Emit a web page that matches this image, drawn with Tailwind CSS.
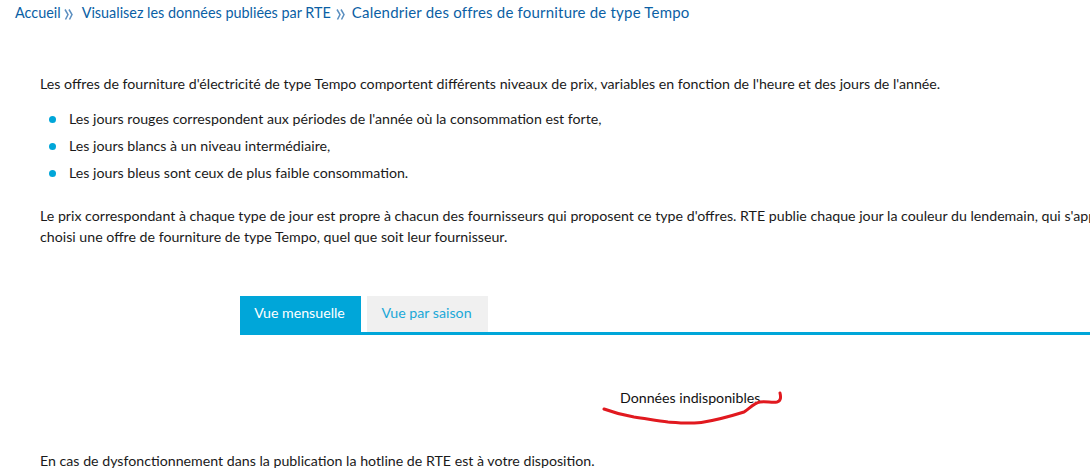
<!DOCTYPE html>
<html lang="fr">
<head>
<meta charset="utf-8">
<script src="https://cdn.jsdelivr.net/npm/@tailwindcss/browser@4"></script>
</head>
<body class="bg-white">
<div class="relative w-[1090px] h-[476px] overflow-hidden font-['Lato','Noto_Sans',sans-serif] text-[14.2px] text-[#1a1a1a]">
  <nav class="flex items-center h-[25px] pl-[15px] text-[#0b5fa5]">
    <span class="text-[14.4px]">Accueil</span>
    <svg class="ml-[3px] mr-[8px] mt-[4px]" width="10" height="13" viewBox="0 0 10 13" fill="none" stroke="#5b8fc0" stroke-width="1.5"><path d="M1 1.5l3 5-2.5 5M5 1.5l3 5-2.5 5"/></svg>
    <span class="text-[14.4px]">Visualisez les données publiées par RTE</span>
    <svg class="ml-[5px] mr-[6px] mt-[4px]" width="10" height="13" viewBox="0 0 10 13" fill="none" stroke="#5b8fc0" stroke-width="1.5"><path d="M1 1.5l3 5-2.5 5M5 1.5l3 5-2.5 5"/></svg>
    <span class="text-[15px] tracking-[0.2px]">Calendrier des offres de fourniture de type Tempo</span>
  </nav>
  <main class="pl-[40px] pt-[49px] whitespace-nowrap">
    <p class="leading-[20px]">Les offres de fourniture d'électricité de type Tempo comportent différents niveaux de prix, variables en fonction de l'heure et des jours de l'année.</p>
    <ul class="mt-[15px] flex flex-col gap-[7px]">
      <li class="flex items-center leading-[20px]"><span class="w-[7px] h-[7px] rounded-full bg-[#00a6d9] ml-[9px] mr-[13px]"></span>Les jours rouges correspondent aux périodes de l'année où la consommation est forte,</li>
      <li class="flex items-center leading-[20px]"><span class="w-[7px] h-[7px] rounded-full bg-[#00a6d9] ml-[9px] mr-[13px]"></span>Les jours blancs à un niveau intermédiaire,</li>
      <li class="flex items-center leading-[20px]"><span class="w-[7px] h-[7px] rounded-full bg-[#00a6d9] ml-[9px] mr-[13px]"></span>Les jours bleus sont ceux de plus faible consommation.</li>
    </ul>
    <p class="mt-[22px] leading-[21px]">Le prix correspondant à chaque type de jour est propre à chacun des fournisseurs qui proposent ce type d'offres. RTE publie chaque jour la couleur du lendemain, qui s'applique à tous les clients ayant<br>choisi une offre de fourniture de type Tempo, quel que soit leur fournisseur.</p>
    <div class="ml-[200px] mt-[49px] flex gap-[6px] border-b-[3px] border-[#00a6d9] h-[39px]">
      <div class="w-[121px] h-[36px] bg-[#00a6d9] text-white flex items-center justify-center pb-[2px] pr-[2px]">Vue mensuelle</div>
      <div class="w-[121px] h-[36px] bg-[#f0f0f0] text-[#1ba8d8] flex items-center justify-center pb-[2px] pr-[2px]">Vue par saison</div>
    </div>
    <p class="ml-[580px] mt-[53px] leading-[20px] text-[#111]">Données indisponibles</p>
    <p class="mt-[43px] leading-[20px]">En cas de dysfonctionnement dans la publication la hotline de RTE est à votre disposition.</p>
  </main>
  <svg class="absolute left-0 top-0 pointer-events-none" width="1090" height="476" fill="none"><path d="M604 409C612 412 622 415 634 417C648 419 658 421 668 422C682 423 694 424 704 422C716 420 728 417 744 412C750 408 754 403 760 402C766 401 772 403 777 402C781 401 781 397 780 393" stroke="#e1191f" stroke-width="3" stroke-linecap="round" stroke-linejoin="round"/></svg>
</div>
</body>
</html>
